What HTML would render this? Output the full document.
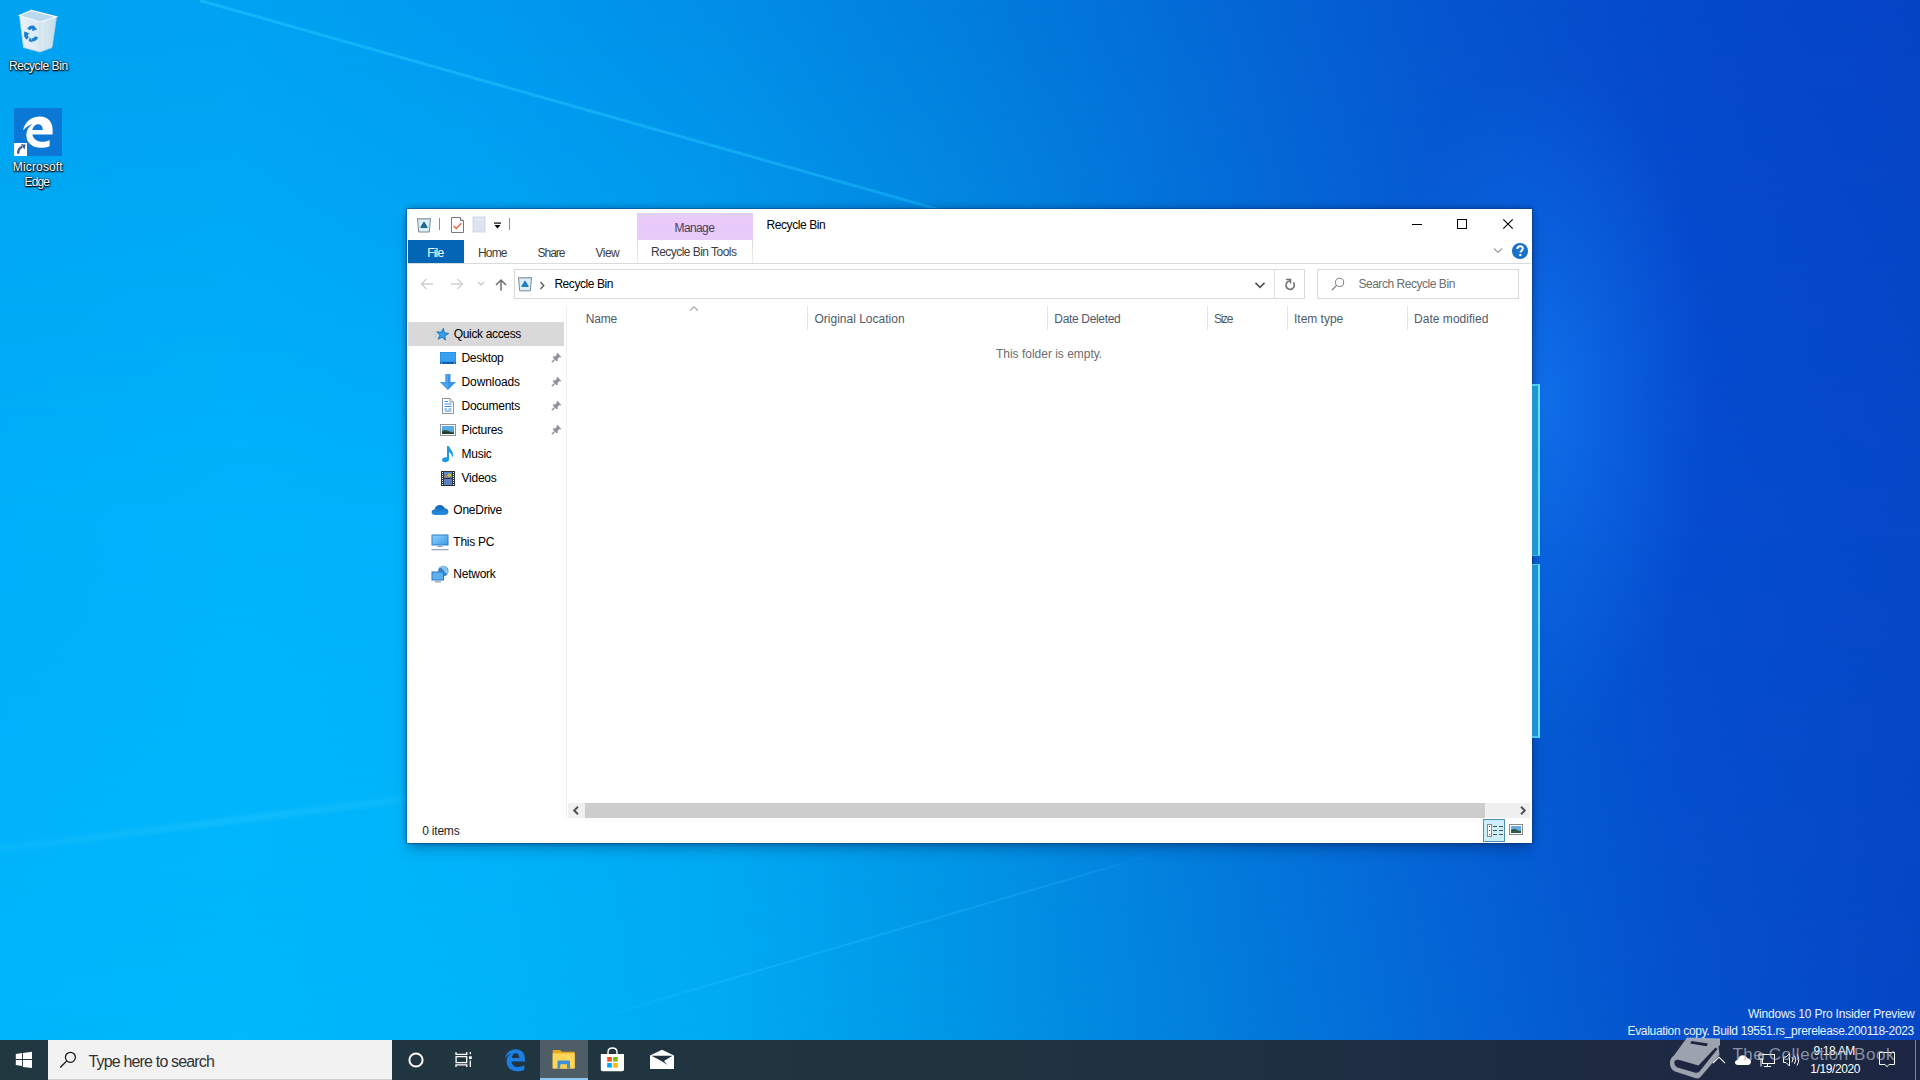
<!DOCTYPE html><html><head><meta charset="utf-8"><title>Recycle Bin</title><style>
*{margin:0;padding:0;box-sizing:border-box}
html,body{width:1920px;height:1080px;overflow:hidden}
body{position:relative;font-family:"Liberation Sans",sans-serif;font-size:12px;color:#000;background:#00aaf2}
.a{position:absolute}
.t{position:absolute;white-space:nowrap;line-height:normal}
svg{position:absolute;overflow:visible}
</style></head><body>
<div class="a" style="left:0;top:0;width:1920px;height:1080px;background:linear-gradient(90deg,#00a2f0 0.0%,#00a2f2 12.5%,#009af0 25.0%,#028ee8 37.5%,#027ede 50.0%,#046ad6 62.5%,#0656d0 75.0%,#0549cc 87.5%,#0644c6 100.0%)"></div>
<div class="a" style="left:0;top:0;width:1920px;height:1080px;background:linear-gradient(90deg,#00b0fa 0.0%,#00b4fc 12.5%,#00b2fb 25.0%,#00a8f4 37.5%,#0294e6 50.0%,#0478de 62.5%,#065ed6 75.0%,#054cd0 87.5%,#0548c8 100.0%);-webkit-mask-image:linear-gradient(180deg,transparent 0px,#000 540px,#000 1080px);mask-image:linear-gradient(180deg,transparent 0px,#000 540px,#000 1080px)"></div>
<div class="a" style="left:0;top:0;width:1920px;height:1080px;background:linear-gradient(90deg,#00b6fb 0.0%,#00b8fb 12.5%,#00b4f8 25.0%,#00abf2 37.5%,#0096e6 50.0%,#0280dc 62.5%,#0468d6 75.0%,#0552cc 87.5%,#0546c4 100.0%);-webkit-mask-image:linear-gradient(180deg,transparent 0px,transparent 540px,#000 1080px);mask-image:linear-gradient(180deg,transparent 0px,transparent 540px,#000 1080px)"></div>
<div class="a" style="left:1400px;top:80px;width:330px;height:680px;background:radial-gradient(ellipse 50% 50% at 44% 47%,rgba(25,135,255,0.5),rgba(25,135,255,0.25) 45%,rgba(25,135,255,0) 100%)"></div>
<div class="a" style="left:200px;top:-1px;width:1000px;height:3px;transform-origin:0 1.5px;transform:rotate(15.8deg);background:linear-gradient(90deg,rgba(30,195,255,0.6),rgba(30,195,255,0.5) 50%,rgba(30,195,255,0.3));filter:blur(0.7px)"></div>
<div class="a" style="left:560px;top:1028px;width:640px;height:2px;transform-origin:0 1px;transform:rotate(-16.4deg);background:linear-gradient(90deg,rgba(60,200,255,0),rgba(60,200,255,0.25) 30%,rgba(60,200,255,0.2) 80%,rgba(60,200,255,0));filter:blur(0.6px)"></div>
<div class="a" style="left:-20px;top:846px;width:460px;height:6px;transform-origin:20px 3px;transform:rotate(-7deg);background:linear-gradient(90deg,rgba(90,215,255,0.10),rgba(90,215,255,0.22) 60%,rgba(90,215,255,0.12));filter:blur(2px)"></div>
<svg style="left:0;top:0" width="80" height="60" viewBox="0 0 80 60">
<defs><linearGradient id="rbg" x1="0" x2="1" y1="0" y2="0"><stop offset="0" stop-color="#e8f2f8"/><stop offset="0.55" stop-color="#dbe9f2"/><stop offset="1" stop-color="#c5dcea"/></linearGradient></defs>
<path d="M19.5,15.5 L31.5,10.5 L56.5,16.8 L52,47.5 L40,52 L23.5,47.5 Z" fill="url(#rbg)" stroke="#bcd6e6" stroke-width="0.8"/>
<path d="M19.5,15.5 L40,22 L56.5,16.8 L31.5,10.5 Z" fill="#b9d9ee" stroke="#eef7fc" stroke-width="1.2"/>
<path d="M40,22 L40,52" stroke="#c8dcea" stroke-width="1"/>
<g fill="none" stroke="#1a7fd4" stroke-width="3.2" stroke-linecap="butt">
<path d="M28.5,29.5 Q30.5,26.2 33.8,27.6"/>
<path d="M26.3,32.5 Q24.5,36 27.8,38.5"/>
<path d="M31.5,40 Q35.5,40.2 36.5,36.8"/>
</g>
<g fill="#1a7fd4"><path d="M33,25 L37.2,29.6 L32,31 Z"/><path d="M24,31.5 L29.5,33.5 L25.5,37 Z"/><path d="M30,37 L32.5,42.5 L28.5,41 Z"/></g>
</svg>
<div class="t" style="left:8.90px;top:59.00px;font-size:12px;color:#fff;letter-spacing:-0.410px;text-shadow:0 0 2px #000,0 1px 1px #000,1px 1px 2px rgba(0,0,0,.8);">Recycle Bin</div>
<svg style="left:14px;top:108px" width="48" height="48" viewBox="0 0 48 48">
<rect x="0" y="0" width="48" height="48" fill="#0b78d6"/>
<path fill-rule="evenodd" d="M9,22.6 C10.5,13.5 17.5,8.4 26,8.4 C34,8.4 38.6,14 38.6,21.5 L38.6,26.4 L18.4,26.4 C19,31 23.5,33.8 29,33.8 C31.5,33.8 33.6,33.2 35.6,32.3 L35.6,38.2 C33,39.3 30,39.7 27,39.7 C18,39.7 12.4,34.5 12.4,27.4 C12.4,22 15,18.2 18.9,16.2 C16,16.4 12.2,18.6 9,22.6 Z M18.4,22.1 C19,18.6 21.4,16.3 24,16.3 C26.8,16.3 28.8,18.4 28.8,22.1 Z" fill="#fff"/>
<rect x="0" y="35" width="13" height="13" fill="#fff"/>
<path d="M4.2,45.8 C4.2,41.5 5.5,39.6 8.3,38.9" fill="none" stroke="#3d5f98" stroke-width="2.4"/>
<path d="M6.8,36.3 L11.6,36.6 L10.6,41.4 Z" fill="#3d5f98"/>
</svg>
<div class="t" style="left:12.80px;top:160.00px;font-size:12px;color:#fff;letter-spacing:0.150px;text-shadow:0 0 2px #000,0 1px 1px #000,1px 1px 2px rgba(0,0,0,.8);">Microsoft</div>
<div class="t" style="left:24.60px;top:175.00px;font-size:12px;color:#fff;letter-spacing:-0.867px;text-shadow:0 0 2px #000,0 1px 1px #000,1px 1px 2px rgba(0,0,0,.8);">Edge</div>
<div class="a" style="left:407px;top:209px;width:1125px;height:634px;background:#fff;box-shadow:0 0 0 1px rgba(10,60,110,0.40),0 1px 6px rgba(0,15,55,0.25),0 8px 14px -3px rgba(0,15,55,0.30),0 -3px 8px -2px rgba(0,15,55,0.22)"></div>
<svg style="left:416px;top:217px" width="16" height="16" viewBox="0 0 16 16">
<path d="M1.5,1.5 L14.5,1.5 L13.3,15 L2.7,15 Z" fill="#dceefa" stroke="#7d8a96" stroke-width="1"/>
<path d="M1.5,1.8 L14.5,1.8" stroke="#9aa6b0" stroke-width="1.4"/>
<path d="M8,5.6 L10.9,10.3 L5.1,10.3 Z" fill="#1e6a90" stroke="#1e6a90" stroke-width="1.6" stroke-linejoin="round"/>
</svg>
<div class="a" style="left:439px;top:218px;width:1px;height:12px;background:#8a8a8a"></div>
<svg style="left:450px;top:216px" width="16" height="18" viewBox="0 0 16 18">
<path d="M1.5,1.5 L10.5,1.5 L13.5,4.5 L13.5,16.5 L1.5,16.5 Z" fill="#fff" stroke="#7a7a7a" stroke-width="1"/>
<path d="M10.5,1.5 L10.5,4.5 L13.5,4.5" fill="#f4f4f4" stroke="#7a7a7a" stroke-width="1"/>
<path d="M3.5,10 L6.3,12.5 L11.2,7.2" fill="none" stroke="#e0603e" stroke-width="1.3"/>
</svg>
<svg style="left:472px;top:216px" width="16" height="18" viewBox="0 0 16 18">
<rect x="1" y="1" width="12" height="15" fill="#dde4f0" stroke="#cfd8e6" stroke-width="1"/>
<path d="M2,3.5 L12,3.5" stroke="#e8ecf6" stroke-width="1"/>
</svg>
<svg style="left:493px;top:222px" width="10" height="9" viewBox="0 0 10 9">
<rect x="1" y="0.5" width="7" height="1.2" fill="#000"/>
<path d="M1.5,3 L7.5,3 L4.5,6.5 Z" fill="#000"/>
</svg>
<div class="a" style="left:509px;top:218px;width:1px;height:12px;background:#8a8a8a"></div>
<div class="a" style="left:637px;top:213px;width:116px;height:27px;background:linear-gradient(180deg,#dccff4 0px,#e6cdf9 3px,#eac9fa 8px,#e6cbfa 16px,#e8cbf9 27px)"></div>
<div class="a" style="left:637px;top:240px;width:1px;height:23px;background:linear-gradient(180deg,#dcdcdc,#eeeeee)"></div>
<div class="a" style="left:752px;top:240px;width:1px;height:23px;background:linear-gradient(180deg,#dcdcdc,#eeeeee)"></div>
<div class="t" style="left:674.50px;top:221.00px;font-size:12px;color:#4a3d5a;letter-spacing:-0.600px;">Manage</div>
<div class="t" style="left:766.40px;top:218.00px;font-size:12px;color:#000;letter-spacing:-0.400px;">Recycle Bin</div>
<div class="a" style="left:1412px;top:224px;width:10px;height:1px;background:#000"></div>
<div class="a" style="left:1457px;top:219px;width:10px;height:10px;border:1px solid #000"></div>
<svg style="left:1503px;top:219px" width="10" height="10" viewBox="0 0 10 10"><path d="M0.3,0.3 L9.7,9.7 M9.7,0.3 L0.3,9.7" stroke="#000" stroke-width="1.1"/></svg>
<div class="a" style="left:408px;top:240px;width:56px;height:23px;background:#0265b5"></div>
<div class="t" style="left:427.25px;top:246.00px;font-size:12px;color:#fff;letter-spacing:-0.833px;">File</div>
<div class="t" style="left:478.00px;top:246.00px;font-size:12px;color:#3c3c3c;letter-spacing:-0.833px;">Home</div>
<div class="t" style="left:537.50px;top:246.00px;font-size:12px;color:#3c3c3c;letter-spacing:-1.000px;">Share</div>
<div class="t" style="left:595.60px;top:246.00px;font-size:12px;color:#3c3c3c;letter-spacing:-0.533px;">View</div>
<div class="t" style="left:651.00px;top:245.00px;font-size:12px;color:#3c3c3c;letter-spacing:-0.537px;">Recycle Bin Tools</div>
<div class="a" style="left:408px;top:263px;width:1123px;height:1px;background:#dadbdc"></div>
<svg style="left:1493px;top:247px" width="10" height="8" viewBox="0 0 10 8"><path d="M1,1.5 L5,5.5 L9,1.5" fill="none" stroke="#9a9a9a" stroke-width="1.1"/></svg>
<svg style="left:1511px;top:242px" width="18" height="18" viewBox="0 0 18 18"><circle cx="9" cy="9" r="8" fill="#1568c0"/><circle cx="9" cy="9" r="7" fill="#1a73cc"/>
<path d="M6.4,7 C6.4,5.3 7.5,4.3 9.1,4.3 C10.7,4.3 11.8,5.2 11.8,6.6 C11.8,8.6 9.4,8.7 9.4,10.6" fill="none" stroke="#fff" stroke-width="1.9"/><rect x="8.3" y="12" width="2.1" height="2.1" fill="#fff"/></svg>
<svg style="left:420px;top:278px" width="14" height="12" viewBox="0 0 14 12"><path d="M13,6 L1.5,6 M6.5,1 L1.5,6 L6.5,11" fill="none" stroke="#d0d0d0" stroke-width="1.3"/></svg>
<svg style="left:450px;top:278px" width="14" height="12" viewBox="0 0 14 12"><path d="M1,6 L12.5,6 M7.5,1 L12.5,6 L7.5,11" fill="none" stroke="#d0d0d0" stroke-width="1.3"/></svg>
<svg style="left:477px;top:281px" width="8" height="6" viewBox="0 0 8 6"><path d="M1,1 L4,4 L7,1" fill="none" stroke="#c4c4c4" stroke-width="1.1"/></svg>
<svg style="left:494px;top:278px" width="14" height="14" viewBox="0 0 14 14"><path d="M7,12.8 L7,2 M2,7 L7,2 L12,7" fill="none" stroke="#6e6e6e" stroke-width="1.5"/></svg>
<div class="a" style="left:514px;top:269px;width:791px;height:30px;border:1px solid #d9d9d9"></div>
<div class="a" style="left:1274px;top:270px;width:1px;height:28px;background:#e3e3e3"></div>
<svg style="left:517px;top:276px" width="16" height="16" viewBox="0 0 16 16">
<path d="M1.5,1.5 L14.5,1.5 L13.3,14.8 L2.7,14.8 Z" fill="#dceefa" stroke="#7d8a96" stroke-width="1"/>
<path d="M1.5,1.8 L14.5,1.8" stroke="#9aa6b0" stroke-width="1.4"/>
<path d="M8,5.6 L10.9,10.3 L5.1,10.3 Z" fill="#1f7fc4" stroke="#1f7fc4" stroke-width="1.6" stroke-linejoin="round"/>
</svg>
<svg style="left:539px;top:281px" width="7" height="9" viewBox="0 0 7 9"><path d="M1.5,1 L4.8,4.5 L1.5,8" fill="none" stroke="#555" stroke-width="1.3"/></svg>
<div class="t" style="left:554.40px;top:277.00px;font-size:12px;color:#000;letter-spacing:-0.440px;">Recycle Bin</div>
<svg style="left:1254px;top:281px" width="12" height="9" viewBox="0 0 12 9"><path d="M1.5,1.8 L6,6.3 L10.5,1.8" fill="none" stroke="#555" stroke-width="1.7"/></svg>
<svg style="left:1283px;top:278px" width="14" height="13" viewBox="0 0 14 13"><path d="M7,3 A4.2,4.2 0 1 0 10.44,4.6" fill="none" stroke="#707070" stroke-width="1.6"/><path d="M3.1,1.5 L7.5,1.5 L7.5,5.6" fill="none" stroke="#707070" stroke-width="1.5"/></svg>
<div class="a" style="left:1317px;top:269px;width:202px;height:30px;border:1px solid #d9d9d9"></div>
<svg style="left:1331px;top:277px" width="14" height="14" viewBox="0 0 14 14"><circle cx="8.6" cy="5.4" r="4.1" fill="none" stroke="#7a7a7a" stroke-width="1"/><path d="M5.7,8.3 L1,13" stroke="#7a7a7a" stroke-width="1.1"/></svg>
<div class="t" style="left:1358.40px;top:277.00px;font-size:12px;color:#6d6d6d;letter-spacing:-0.459px;">Search Recycle Bin</div>
<div class="a" style="left:408px;top:322px;width:156px;height:24px;background:#d9d9d9"></div>
<div class="a" style="left:566px;top:306px;width:1px;height:512px;background:#f0f0f0"></div>
<svg style="left:432.5px;top:327px" width="16" height="16" viewBox="0 0 16 16">
<path d="M10.38,1.36 L11.31,5.73 L15.70,6.51 L11.84,8.74 L12.46,13.16 L9.14,10.17 L5.12,12.13 L6.94,8.05 L3.84,4.84 L8.28,5.30 Z" fill="#2ea2ee" stroke="#1a6db8" stroke-width="0.9" stroke-linejoin="round"/>
<path d="M1.5,7.5 L4,7.5 M1,10 L3.5,10" stroke="#9ccbf0" stroke-width="0.8"/>
</svg>
<svg style="left:440px;top:352px" width="16" height="12" viewBox="0 0 16 12">
<rect x="0" y="0" width="16" height="12" fill="#1b86e3"/><rect x="0.5" y="0.5" width="15" height="9" fill="#39a0f0"/>
<rect x="0" y="10" width="16" height="2" fill="#0e5fb0"/><rect x="1" y="10.5" width="1" height="1" fill="#cfe8ff"/><rect x="14" y="10.5" width="1" height="1" fill="#cfe8ff"/>
</svg>
<svg style="left:440px;top:374px" width="16" height="16" viewBox="0 0 16 16">
<path d="M5.5,0 L10.5,0 L10.5,8 L16,8 L8,16 L0,8 L5.5,8 Z" fill="#3b95e4"/>
<path d="M5.5,0 L8,0 L8,16 L0,8 L5.5,8 Z" fill="#4aa3ec"/>
</svg>
<svg style="left:442px;top:398px" width="12" height="16" viewBox="0 0 12 16">
<path d="M0.5,0.5 L8,0.5 L11.5,4 L11.5,15.5 L0.5,15.5 Z" fill="#fff" stroke="#8e949b" stroke-width="1"/>
<path d="M8,0.5 L8,4 L11.5,4" fill="#eef1f4" stroke="#8e949b" stroke-width="1"/>
<path d="M2.5,3.5 L6,3.5 M2.5,6 L9.5,6 M2.5,8.5 L9.5,8.5 M2.5,11 L5,11 M6.5,11 L9.5,11 M2.5,13 L9.5,13" stroke="#3a8fd8" stroke-width="1"/>
</svg>
<svg style="left:440px;top:424px" width="16" height="12" viewBox="0 0 16 12">
<rect x="0.5" y="0.5" width="15" height="11" fill="#fff" stroke="#8e949b" stroke-width="1"/>
<rect x="2" y="2" width="12" height="8" fill="#5aa8e8"/>
<path d="M2,7 C5,5 8,6 10,7.5 C11.5,8.2 13,8 14,7.5 L14,10 L2,10 Z" fill="#2f5f4a"/>
<path d="M2,8 C5,7 8,8 14,9.5 L14,10 L2,10 Z" fill="#1f3f35"/>
</svg>
<svg style="left:441px;top:446px" width="13" height="17" viewBox="0 0 13 17">
<path d="M6,0 L8,0 C8.5,3 12,5 12,8.5 C12,10 11.5,11 11,12 C11.2,10.5 11,8 8,6 L8,13.5 C8,15.5 6,16.2 4,16.2 C2,16.2 1,15.2 1,14 C1,12.3 2.8,11.3 4.5,11.3 C5,11.3 5.6,11.4 6,11.6 Z" fill="#1f98e8"/>
</svg>
<svg style="left:441px;top:471px" width="14" height="15" viewBox="0 0 14 15">
<rect x="0" y="0" width="14" height="15" fill="#2b3340"/>
<rect x="3" y="1" width="8" height="6" fill="#5b86c8"/><rect x="3" y="8" width="8" height="6" fill="#5c7fc0"/>
<circle cx="8.3" cy="4.2" r="1.8" fill="#c8c020"/><rect x="3.5" y="4.5" width="3" height="2" fill="#c87a50"/>
<g fill="#fff"><rect x="1" y="1" width="1" height="1"/><rect x="1" y="3" width="1" height="1"/><rect x="1" y="5" width="1" height="1"/><rect x="1" y="7" width="1" height="1"/><rect x="1" y="9" width="1" height="1"/><rect x="1" y="11" width="1" height="1"/><rect x="1" y="13" width="1" height="1"/>
<rect x="12" y="1" width="1" height="1"/><rect x="12" y="3" width="1" height="1"/><rect x="12" y="5" width="1" height="1"/><rect x="12" y="7" width="1" height="1"/><rect x="12" y="9" width="1" height="1"/><rect x="12" y="11" width="1" height="1"/><rect x="12" y="13" width="1" height="1"/></g>
</svg>
<svg style="left:431px;top:504px" width="18" height="12" viewBox="0 0 18 12">
<defs><linearGradient id="odg" x1="0" x2="0" y1="0" y2="1"><stop offset="0" stop-color="#0f63b8"/><stop offset="1" stop-color="#2b8fe0"/></linearGradient></defs>
<path d="M4,11 C1.8,11 0.6,9.8 0.6,8.3 C0.6,6.7 1.9,5.6 3.5,5.6 C4,3 6.2,1 9,1 C11.3,1 13,2.3 13.8,4.2 C16,4.3 17.4,5.8 17.4,7.7 C17.4,9.6 16,11 14,11 Z" fill="url(#odg)"/>
</svg>
<svg style="left:431px;top:534px" width="18" height="17" viewBox="0 0 18 17">
<defs><linearGradient id="pcg" x1="0" x2="1" y1="0" y2="1"><stop offset="0" stop-color="#8fd0fa"/><stop offset="1" stop-color="#3e9be6"/></linearGradient></defs>
<rect x="1" y="1" width="16" height="10" fill="url(#pcg)" stroke="#2f7fc6" stroke-width="1"/>
<rect x="6.5" y="12" width="5" height="1" fill="#8aa0b4"/>
<rect x="0.5" y="15" width="17" height="1.3" fill="#9aa8b8"/>
</svg>
<svg style="left:431px;top:565px" width="18" height="18" viewBox="0 0 18 18">
<circle cx="12.3" cy="6" r="5.2" fill="#3a86c8"/><path d="M8,3 C10,2 12,4 13,6 C14,8 15.5,9 17,8.5 L17,6 C16,2 13.5,0.8 12,0.8 C10.5,0.8 9,1.8 8,3 Z" fill="#8ac4ec"/>
<rect x="1" y="7" width="11.5" height="8" fill="#5cb0f0" stroke="#2a78c0" stroke-width="1"/>
<rect x="4" y="16.2" width="6" height="1.2" fill="#8a9aaa"/>
</svg>
<svg style="left:551px;top:352px" width="11" height="11" viewBox="0 0 11 11"><path d="M6.2,0.8 L10.2,4.8 L9.2,5.4 L8.4,5 L6.6,6.8 L6.8,8.6 L5.8,9.4 L1.6,5.2 L2.4,4.2 L4.2,4.4 L6,2.6 L5.6,1.8 Z" fill="#8d9299"/><path d="M3.6,7.4 L0.8,10.2" stroke="#8d9299" stroke-width="1.4"/></svg>
<svg style="left:551px;top:376px" width="11" height="11" viewBox="0 0 11 11"><path d="M6.2,0.8 L10.2,4.8 L9.2,5.4 L8.4,5 L6.6,6.8 L6.8,8.6 L5.8,9.4 L1.6,5.2 L2.4,4.2 L4.2,4.4 L6,2.6 L5.6,1.8 Z" fill="#8d9299"/><path d="M3.6,7.4 L0.8,10.2" stroke="#8d9299" stroke-width="1.4"/></svg>
<svg style="left:551px;top:400px" width="11" height="11" viewBox="0 0 11 11"><path d="M6.2,0.8 L10.2,4.8 L9.2,5.4 L8.4,5 L6.6,6.8 L6.8,8.6 L5.8,9.4 L1.6,5.2 L2.4,4.2 L4.2,4.4 L6,2.6 L5.6,1.8 Z" fill="#8d9299"/><path d="M3.6,7.4 L0.8,10.2" stroke="#8d9299" stroke-width="1.4"/></svg>
<svg style="left:551px;top:424px" width="11" height="11" viewBox="0 0 11 11"><path d="M6.2,0.8 L10.2,4.8 L9.2,5.4 L8.4,5 L6.6,6.8 L6.8,8.6 L5.8,9.4 L1.6,5.2 L2.4,4.2 L4.2,4.4 L6,2.6 L5.6,1.8 Z" fill="#8d9299"/><path d="M3.6,7.4 L0.8,10.2" stroke="#8d9299" stroke-width="1.4"/></svg>
<div class="t" style="left:453.75px;top:327.00px;font-size:12px;color:#000;letter-spacing:-0.341px;">Quick access</div>
<div class="t" style="left:461.50px;top:351.00px;font-size:12px;color:#000;letter-spacing:-0.292px;">Desktop</div>
<div class="t" style="left:461.50px;top:375.00px;font-size:12px;color:#000;letter-spacing:-0.094px;">Downloads</div>
<div class="t" style="left:461.50px;top:399.00px;font-size:12px;color:#000;letter-spacing:-0.25px;">Documents</div>
<div class="t" style="left:461.50px;top:423.00px;font-size:12px;color:#000;letter-spacing:-0.25px;">Pictures</div>
<div class="t" style="left:461.50px;top:447.00px;font-size:12px;color:#000;letter-spacing:-0.25px;">Music</div>
<div class="t" style="left:461.50px;top:471.00px;font-size:12px;color:#000;letter-spacing:-0.25px;">Videos</div>
<div class="t" style="left:453.30px;top:503.00px;font-size:12px;color:#000;letter-spacing:-0.25px;">OneDrive</div>
<div class="t" style="left:453.30px;top:535.00px;font-size:12px;color:#000;letter-spacing:-0.25px;">This PC</div>
<div class="t" style="left:453.30px;top:567.00px;font-size:12px;color:#000;letter-spacing:-0.25px;">Network</div>
<div class="t" style="left:585.80px;top:312.00px;font-size:12px;color:#4d5b6b;letter-spacing:-0.200px;">Name</div>
<div class="t" style="left:814.50px;top:312.00px;font-size:12px;color:#4d5b6b;">Original Location</div>
<div class="t" style="left:1054.30px;top:312.00px;font-size:12px;color:#4d5b6b;letter-spacing:-0.327px;">Date Deleted</div>
<div class="t" style="left:1214.00px;top:312.00px;font-size:12px;color:#4d5b6b;letter-spacing:-1.333px;">Size</div>
<div class="t" style="left:1294.00px;top:312.00px;font-size:12px;color:#4d5b6b;letter-spacing:-0.013px;">Item type</div>
<div class="t" style="left:1414.00px;top:312.00px;font-size:12px;color:#4d5b6b;letter-spacing:0.033px;">Date modified</div>
<div class="a" style="left:807px;top:306px;width:1px;height:24px;background:#e5e5e5"></div>
<div class="a" style="left:1047px;top:306px;width:1px;height:24px;background:#e5e5e5"></div>
<div class="a" style="left:1207px;top:306px;width:1px;height:24px;background:#e5e5e5"></div>
<div class="a" style="left:1287px;top:306px;width:1px;height:24px;background:#e5e5e5"></div>
<div class="a" style="left:1407px;top:306px;width:1px;height:24px;background:#e5e5e5"></div>
<svg style="left:689px;top:305px" width="10" height="7" viewBox="0 0 10 7"><path d="M1.2,5.5 L5,1.7 L8.8,5.5" fill="none" stroke="#9aa3ad" stroke-width="1.1"/></svg>
<div class="t" style="left:996.00px;top:347.00px;font-size:12px;color:#6d6d6d;letter-spacing:-0.015px;">This folder is empty.</div>
<div class="a" style="left:568px;top:803px;width:962px;height:15px;background:#f0f0f0"></div>
<div class="a" style="left:585px;top:803px;width:900px;height:15px;background:#cdcdcd"></div>
<svg style="left:572px;top:806px" width="8" height="9" viewBox="0 0 8 9"><path d="M6,0.8 L2.2,4.5 L6,8.2" fill="none" stroke="#505050" stroke-width="1.9"/></svg>
<svg style="left:1519px;top:806px" width="8" height="9" viewBox="0 0 8 9"><path d="M2,0.8 L5.8,4.5 L2,8.2" fill="none" stroke="#505050" stroke-width="1.9"/></svg>
<div class="t" style="left:422.20px;top:824.00px;font-size:12px;color:#1e1e1e;letter-spacing:-0.200px;">0 items</div>
<div class="a" style="left:1483px;top:819px;width:22px;height:23px;background:#cdeefb;border:1px solid #4f8fb6"></div>
<svg style="left:1487px;top:824px" width="16" height="13" viewBox="0 0 16 13">
<rect x="0.5" y="0.5" width="4" height="12" fill="#fff" stroke="#8a8a8a" stroke-width="1"/>
<g fill="#505050"><rect x="2" y="2" width="1" height="1"/><rect x="2" y="6" width="1" height="1"/><rect x="2" y="10" width="1" height="1"/>
<rect x="6" y="2" width="4" height="1"/><rect x="12" y="2" width="4" height="1"/><rect x="6" y="6" width="4" height="1"/><rect x="12" y="6" width="4" height="1"/><rect x="6" y="10" width="4" height="1"/><rect x="12" y="10" width="4" height="1"/></g>
</svg>
<svg style="left:1509px;top:824px" width="14" height="11" viewBox="0 0 14 11">
<rect x="0.5" y="0.5" width="13" height="10" fill="#fff" stroke="#8a8a8a" stroke-width="1"/>
<rect x="2" y="2" width="10" height="7" fill="#6aa8e0"/><path d="M2,6 C4,4.5 7,5 9,6.5 C10,7 11,7 12,6.8 L12,9 L2,9 Z" fill="#2c5a48"/>
</svg>
<div class="a" style="left:1532px;top:384px;width:8px;height:172px;background:#2196d2;border-top:2px solid #48d0ee;border-right:2px solid #5ee2f6;border-bottom:1px solid #3ab0e8"></div>
<div class="a" style="left:1532px;top:564px;width:8px;height:174px;background:#2390d4;border-top:1px solid #4ac0ee;border-right:2px solid #5ee2f6;border-bottom:2px solid #46c8ee"></div>
<div class="t" style="left:1748.00px;top:1007.00px;font-size:12px;color:#eaf2ff;letter-spacing:-0.207px;">Windows 10 Pro Insider Preview</div>
<div class="t" style="left:1627.50px;top:1024.00px;font-size:12px;color:#eaf2ff;letter-spacing:-0.321px;">Evaluation copy. Build 19551.rs_prerelease.200118-2023</div>
<div class="a" style="left:0;top:1040px;width:1920px;height:40px;background:linear-gradient(90deg,#213740 0%,#213540 30%,#20333f 52%,#1f3042 65%,#1e2c42 78%,#1c2642 100%)"></div>
<svg style="left:15px;top:1051px" width="18" height="18" viewBox="0 0 18 18">
<path d="M0.8,3 L7,2.1 L7,8 L0.8,8 Z M7.9,2 L17,0.8 L17,8 L7.9,8 Z M0.8,9 L7,9 L7,14.9 L0.8,14 Z M7.9,9 L17,9 L17,17.1 L7.9,15.9 Z" fill="#fff"/>
</svg>
<div class="a" style="left:48px;top:1040px;width:344px;height:40px;background:#f2f2f2;border-bottom:1px solid #cfcfcf"></div>
<svg style="left:59px;top:1051px" width="18" height="18" viewBox="0 0 18 18"><circle cx="11.4" cy="6.3" r="5" fill="none" stroke="#111" stroke-width="1.2"/><path d="M7.8,9.9 L1.2,16.5" stroke="#111" stroke-width="1.3"/></svg>
<div class="t" style="left:88.50px;top:1053.00px;font-size:16px;color:#333;letter-spacing:-0.833px;">Type here to search</div>
<svg style="left:407px;top:1051px" width="18" height="18" viewBox="0 0 18 18"><circle cx="9" cy="9" r="6.6" fill="none" stroke="#fff" stroke-width="2"/></svg>
<svg style="left:455px;top:1051px" width="18" height="17" viewBox="0 0 18 17">
<path d="M1,1 L1,3.3 L11.8,3.3 L11.8,1" fill="none" stroke="#fff" stroke-width="1.3"/>
<rect x="1.1" y="5.6" width="10.6" height="6" fill="none" stroke="#fff" stroke-width="1.3"/>
<path d="M1,16 L1,13.8 L11.8,13.8 L11.8,16" fill="none" stroke="#fff" stroke-width="1.3"/>
<path d="M15.3,1 L15.3,3.3 M15.3,9.5 L15.3,16" stroke="#fff" stroke-width="1.3"/><rect x="14" y="5.3" width="2.8" height="2.8" fill="#fff"/>
</svg>
<svg style="left:504px;top:1048px" width="22" height="24" viewBox="0 0 22 24">
<path d="M1,10 C2.5,4 7,1.2 12,1.2 C17.5,1.2 21,5 21,11 L21,13.5 L7.5,13.5 C7.8,17 10.5,19 14,19 C16.5,19 18.5,18.3 20.3,17.3 L20.3,21.8 C18.5,22.8 16,23.3 13.2,23.3 C6.5,23.3 2.6,19.2 2.6,13.3 C2.6,9.5 4.6,6.5 7.6,5 C5,6 2.8,7.8 1,10 Z M7.8,10 L15.3,10 C15.3,7 14,5.2 11.6,5.2 C9.6,5.2 8.2,7.2 7.8,10 Z" fill="#1a7fe0"/>
</svg>
<div class="a" style="left:540px;top:1040px;width:48px;height:40px;background:#4f5d67"></div>
<div class="a" style="left:540px;top:1078px;width:48px;height:2px;background:#8cc6f2"></div>
<svg style="left:552px;top:1049px" width="24" height="21" viewBox="0 0 24 21">
<path d="M0.7,1 L8,1 L10,2.8 L22.7,2.8 L22.7,19.5 L0.7,19.5 Z" fill="#e6a81e"/>
<path d="M0.7,4.3 L22.7,4.3 L22.7,19.5 L0.7,19.5 Z" fill="#ffd55a"/>
<path d="M5.5,19.5 L5.5,12.5 Q5.5,11.5 6.5,11.5 L17,11.5 Q18,11.5 18,12.5 L18,19.5 L15,19.5 L15,15.5 L8.5,15.5 L8.5,19.5 Z" fill="#3c8fd8"/>
<rect x="8.5" y="15.5" width="6.5" height="4" fill="#ffd24a"/>
</svg>
<svg style="left:600px;top:1047px" width="25" height="25" viewBox="0 0 25 25">
<path d="M8,7 L8,5.2 C8,2.5 10,1 12.5,1 C15,1 17,2.5 17,5.2 L17,7" fill="none" stroke="#fff" stroke-width="1.4"/>
<path d="M0.8,7 L24,7 L24,22.5 Q24,24.3 22.2,24.3 L2.6,24.3 Q0.8,24.3 0.8,22.5 Z" fill="#fff"/>
<rect x="7.2" y="10" width="4.6" height="4.6" fill="#f25022"/><rect x="13.2" y="10" width="4.6" height="4.6" fill="#7fba00"/>
<rect x="7.2" y="16" width="4.6" height="4.6" fill="#00a4ef"/><rect x="13.2" y="16" width="4.6" height="4.6" fill="#ffb900"/>
</svg>
<svg style="left:649px;top:1049px" width="26" height="21" viewBox="0 0 26 21">
<path d="M1,6.5 L13,0.8 L25,6.5 L25,20 L1,20 Z" fill="#fff"/>
<path d="M2.5,6.8 L23.5,6.8 L15,12 L18.5,16 L13.2,12.5 Z" fill="#22333f"/>
</svg>
<svg style="left:1712px;top:1056px" width="14" height="8" viewBox="0 0 14 8"><path d="M1,7 L7,1.2 L13,7" fill="none" stroke="#fff" stroke-width="1.1"/></svg>
<svg style="left:1734px;top:1054px" width="18" height="12" viewBox="0 0 18 12"><path d="M4,11 C2,11 1,9.9 1,8.5 C1,7 2.2,6 3.6,6 C4,3.3 6.1,1.2 8.8,1.2 C11,1.2 12.6,2.5 13.4,4.3 C15.5,4.4 17,5.8 17,7.7 C17,9.6 15.6,11 13.8,11 Z" fill="#fff"/></svg>
<svg style="left:1758px;top:1053px" width="18" height="15" viewBox="0 0 18 15">
<rect x="4.5" y="1.5" width="12" height="9" fill="none" stroke="#fff" stroke-width="1"/>
<rect x="6" y="13" width="7" height="1" fill="#fff"/><rect x="9" y="10.5" width="1" height="3" fill="#fff"/>
<rect x="1" y="1" width="4" height="5" fill="#1b2541" stroke="#fff" stroke-width="1"/><rect x="2.5" y="6" width="1" height="7.5" fill="#fff"/>
</svg>
<svg style="left:1782px;top:1052px" width="18" height="16" viewBox="0 0 18 16">
<path d="M1.5,5 L4,5 L7.5,1.5 L7.5,14 L4,10.5 L1.5,10.5 Z" fill="none" stroke="#fff" stroke-width="1"/>
<path d="M10,5.2 Q11.5,7.7 10,10.3 M12.5,3.6 Q15,7.7 12.5,11.9 M15,2 Q18.5,7.7 15,13.5" fill="none" stroke="#fff" stroke-width="1"/>
</svg>
<div class="t" style="left:1813.40px;top:1044.00px;font-size:12px;color:#fff;letter-spacing:-0.350px;">9:18 AM</div>
<div class="t" style="left:1810.30px;top:1062.00px;font-size:12px;color:#fff;letter-spacing:-0.412px;">1/19/2020</div>
<svg style="left:1878px;top:1051px" width="18" height="18" viewBox="0 0 18 18"><path d="M1.5,1.5 L16.5,1.5 L16.5,13.5 L11,13.5 L9,15.8 L7,13.5 L1.5,13.5 Z" fill="none" stroke="#fff" stroke-width="1"/></svg>
<div class="a" style="left:1915px;top:1040px;width:1px;height:40px;background:#7d8799"></div>
<svg style="left:1660px;top:1028px;opacity:0.85" width="80" height="52" viewBox="0 0 80 52">
<path d="M27,9.5 L60,10.5 L60,17 L58.5,18.5 L59.5,27 L40,49.5 Q38,51 35,50 L15,43.5 Q9.5,41 10,34 Q10.5,29.5 14,27.5 Z" fill="#b4b8c2"/>
<path d="M14.5,33 Q16.5,31 19.5,32 L38.5,37.5 L55.5,19.5 L57.5,21 L39.5,43.5 Q37.5,45.5 34.5,44.5 L17.5,39.5 Q13.5,37.5 14.5,33 Z" fill="#1c2640"/>
<path d="M31.5,13 L48,15.5 L46.5,18.2 L30.2,15.6 Z" fill="#1c2640"/>
</svg>
<div class="t" style="left:1732.40px;top:1045.00px;font-size:17px;color:rgba(175,182,196,0.75);letter-spacing:0.556px;">The Collection Book</div>
</body></html>
